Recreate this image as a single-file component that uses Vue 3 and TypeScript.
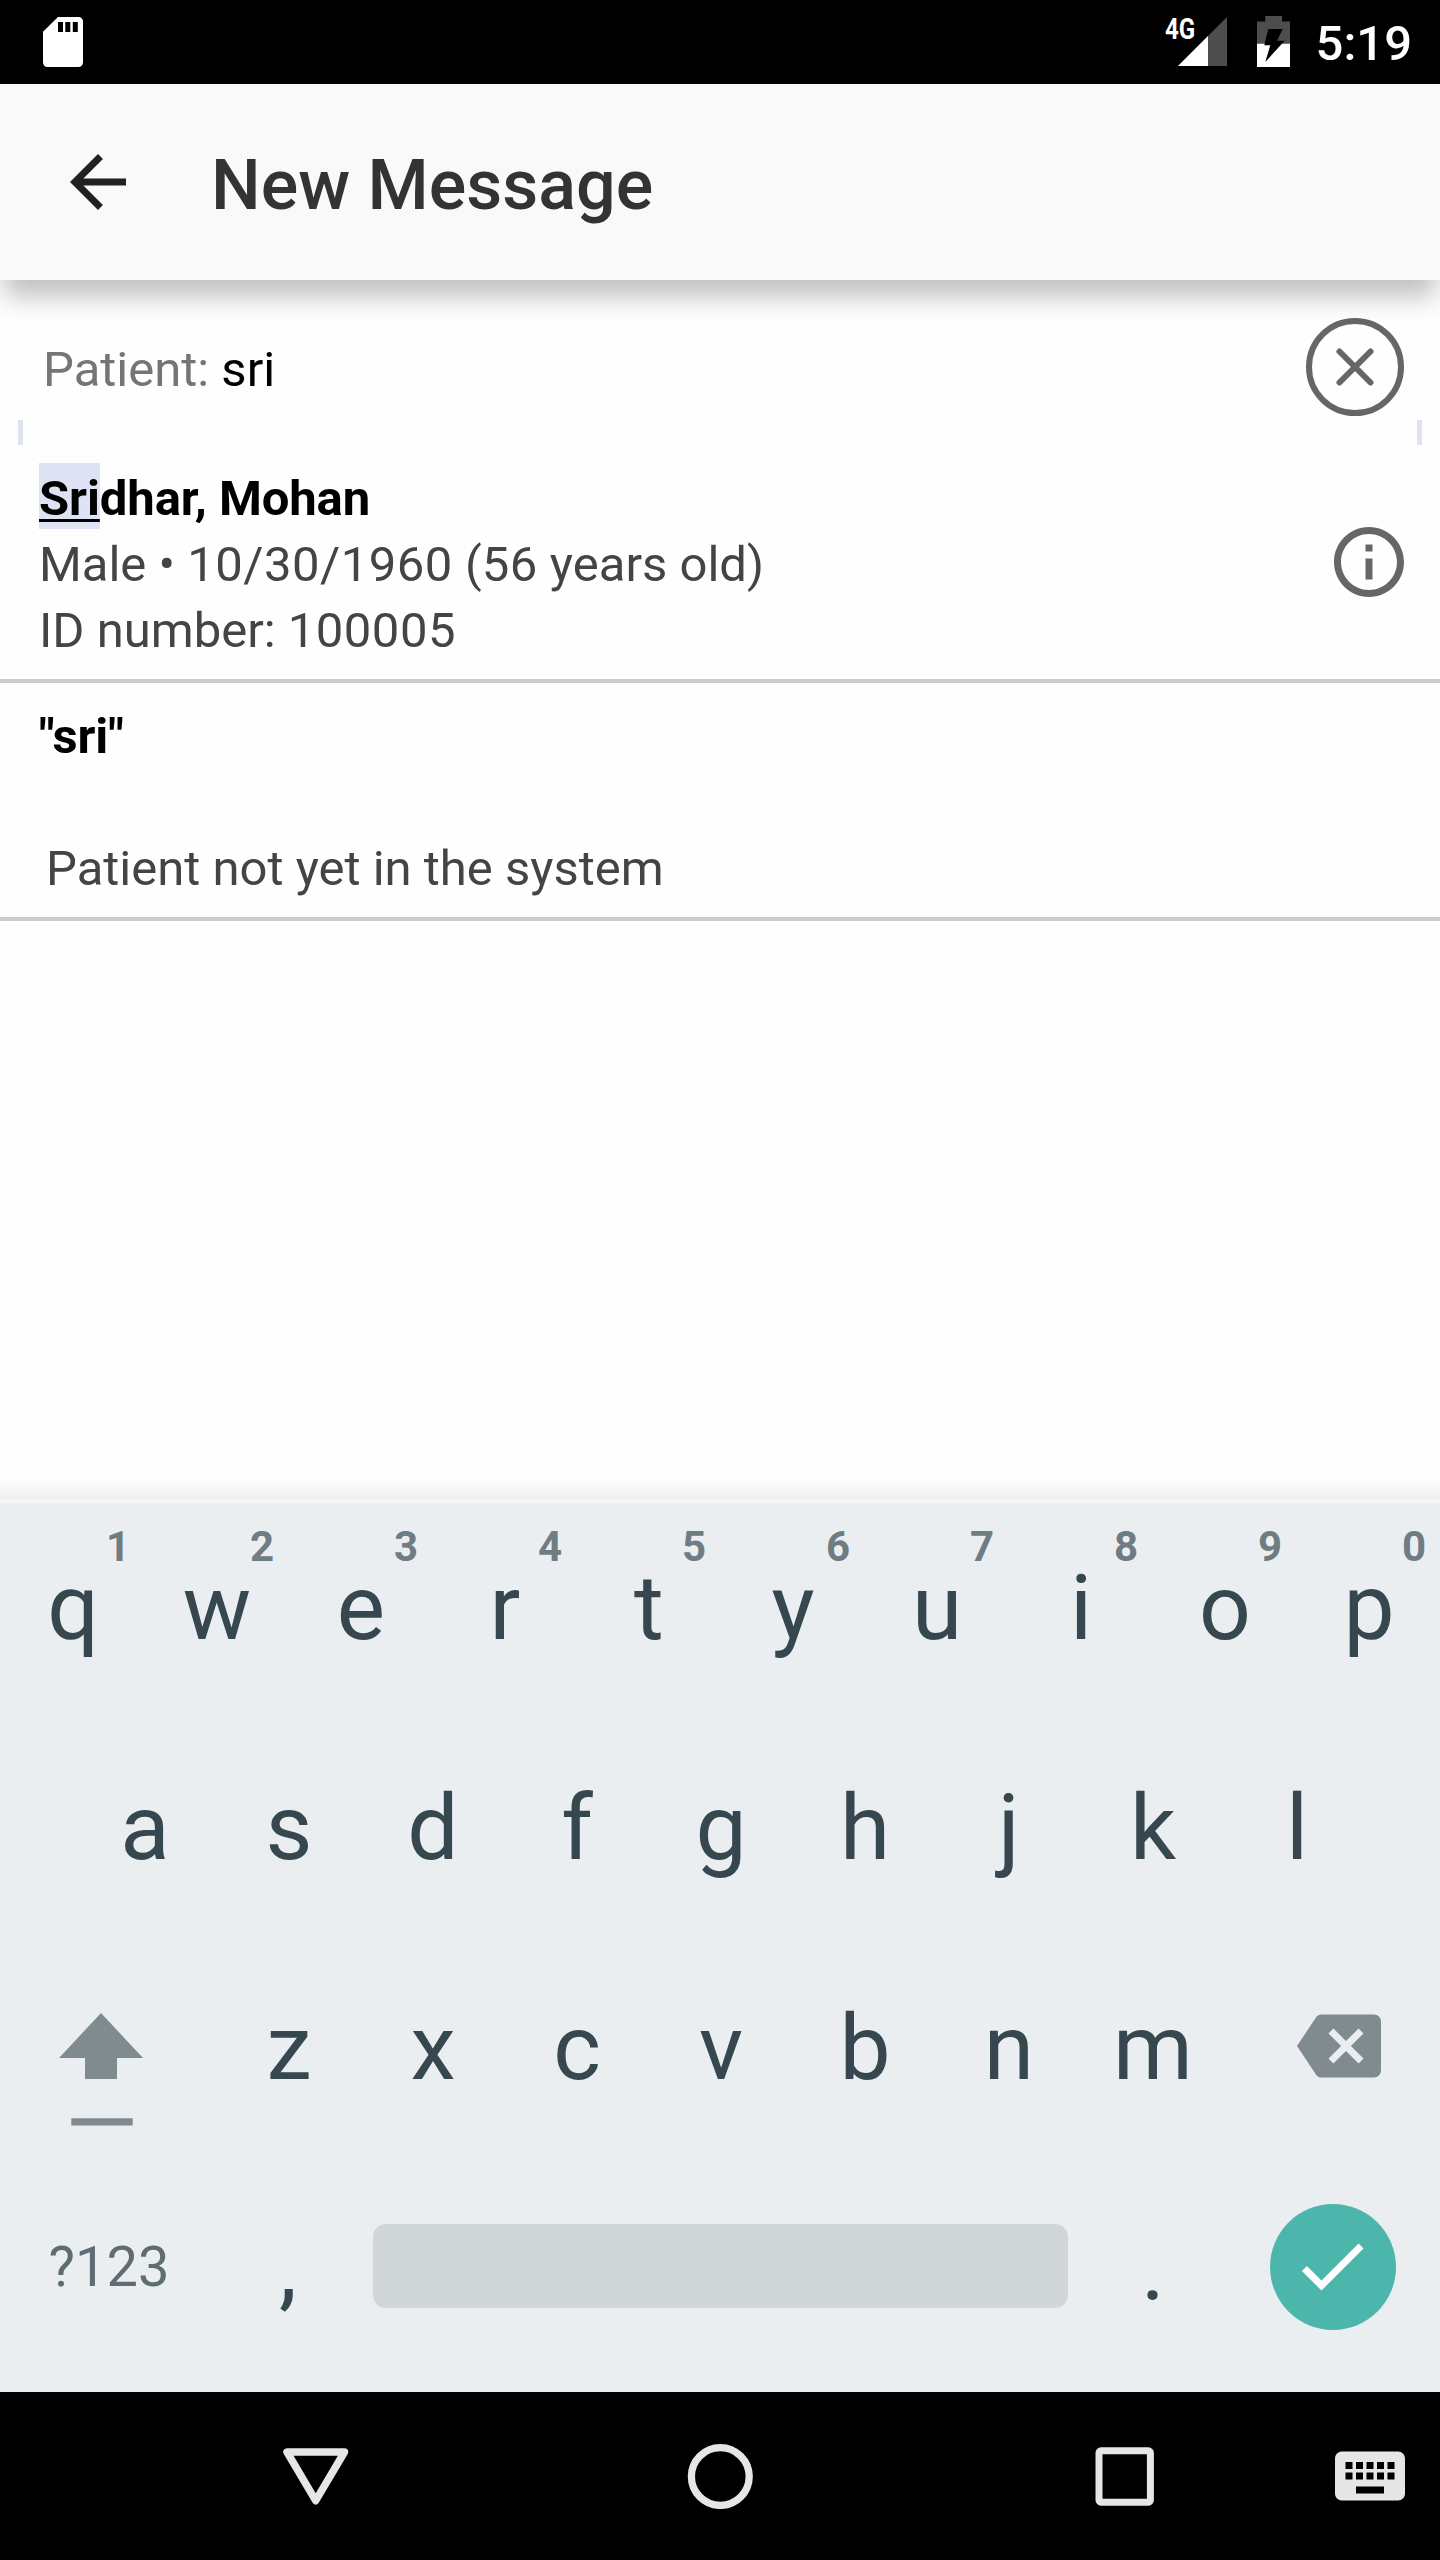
<script setup lang="ts">
interface HintKey {
  label: string
  hint: string
}

const topRow: HintKey[] = 'qwertyuiop'.split('').map((label, i) => ({ label, hint: String((i + 1) % 10) }))
const homeRow: string[] = 'asdfghjkl'.split('')
const bottomRow: string[] = 'zxcvbnm'.split('')
</script>

<template>
  <div class="screen">
    <div class="status">
      <svg class="sd" width="40" height="50" viewBox="0 0 40 50">
        <path d="M15 0H35.5A4.5 4.5 0 0 1 40 4.5V45.500A4.500 4.500 0 0 1 35.500 50H4.500A4.500 4.500 0 0 1 0 45.500V14.800Z" fill="#fff" />
        <path d="M15 5h5v10h-5zM22.300 5h5v10h-5zM29.800 5h5v10h-5z" fill="#000" />
      </svg>
      <div class="status-right">
        <span class="net">4G</span>
        <svg class="signal" width="49" height="49" viewBox="0 0 49 49">
          <path d="M0 49L49 0V49Z" fill="#4d4d4d" />
          <path d="M0 49L30 19V49Z" fill="#fff" />
        </svg>
        <svg class="battery" width="33" height="51" viewBox="0 0 33 51">
          <path d="M8.300 0H25V5.500H33V28H0V5.500H8.300Z" fill="#4d4d4d" />
          <path d="M0 27.700H33V51H0Z" fill="#fff" />
          <path d="M11.300 13H25.700L20 24.700H27.700L8.300 46L13.300 29.300H7.300Z" fill="#000" />
        </svg>
        <span class="clock">5:19</span>
      </div>
    </div>

    <header class="appbar">
      <svg width="84" height="84" viewBox="0 0 24 24" fill="#212121">
        <path d="M20 11H7.830l5.590-5.590L12 4l-8 8 8 8 1.410-1.410L7.830 13H20v-2z" />
      </svg>
      <h1>New Message</h1>
    </header>

    <main class="content">
      <div class="search">
        <div class="field"><span class="field-label">Patient: </span>sri</div>
        <svg width="98" height="98" viewBox="0 0 98 98" fill="none" stroke="#666" stroke-width="6">
          <circle cx="49" cy="49" r="46" />
          <path d="M33.500 33.500L64.500 64.500M64.500 33.500L33.500 64.500" stroke-linecap="round" />
        </svg>
      </div>
      <div class="marks"><i></i><i></i></div>

      <div class="item">
        <div class="lines">
          <div class="name"><mark>Sri</mark>dhar, Mohan</div>
          <div>Male • <span class="num">10/30/1960</span> (<span class="num">56</span> years old)</div>
          <div>ID number: <span class="num">100005</span></div>
        </div>
        <svg class="info" width="84" height="84" viewBox="0 0 24 24" fill="#666">
          <path d="M11 17h2v-6h-2v6zm1-15C6.480 2 2 6.480 2 12s4.480 10 10 10 10-4.480 10-10S17.520 2 12 2zm0 18c-4.410 0-8-3.590-8-8s3.590-8 8-8 8 3.590 8 8-3.590 8-8 8zM11 9h2V7h-2v2z" />
        </svg>
      </div>
      <div class="item">
        <div class="lines spread">
          <div class="name">"sri"</div>
          <div class="note">Patient not yet in the system</div>
        </div>
      </div>
    </main>

    <div class="kb-shadow"></div>
    <section class="keyboard">
      <div class="row">
        <div v-for="k in topRow" :key="k.label" class="key">
          <span class="hint">{{ k.hint }}</span>{{ k.label }}
        </div>
      </div>
      <div class="row">
        <div v-for="k in homeRow" :key="k" class="key">{{ k }}</div>
      </div>
      <div class="row">
        <div class="key wide shift">
          <svg width="84" height="113" viewBox="0 0 84 113" fill="#808b90">
            <path d="M42 0L84 45H58V66H26V45H0Z" />
            <path d="M12.300 105.300H73.700V112.600H12.300Z" />
          </svg>
        </div>
        <div v-for="k in bottomRow" :key="k" class="key">{{ k }}</div>
        <div class="key wide back">
          <svg width="84" height="84" viewBox="0 0 24 24" fill="#808b90">
            <path d="M22 3H7c-.69 0-1.230.35-1.590.88L0 12l5.410 8.110c.36.53.9.89 1.590.89h15c1.100 0 2-.9 2-2V5c0-1.100-.9-2-2-2zm-3 12.590L17.590 17 14 13.410 10.410 17 9 15.590 12.590 12 9 8.410 10.410 7 14 10.590 17.590 7 19 8.410 15.410 12 19 15.590z" />
          </svg>
        </div>
      </div>
      <div class="row">
        <div class="key wide symbols">?123</div>
        <div class="key comma">,</div>
        <div class="key space"><span class="bar"></span></div>
        <div class="key">.</div>
        <div class="key wide enter">
          <span class="disc">
            <svg width="84" height="84" viewBox="0 0 24 24" fill="#fff">
              <path d="M9 16.170L4.830 12l-1.420 1.410L9 19 21 7l-1.410-1.410z" />
            </svg>
          </span>
        </div>
      </div>
    </section>

    <nav class="navbar">
      <svg class="nav-back" width="66" height="58" viewBox="0 0 66 58" fill="none" stroke="#e6e6e6" stroke-width="7.500" stroke-linejoin="round">
        <path d="M4 5H61.500L32.700 53.700Z" />
      </svg>
      <svg class="nav-home" width="66" height="66" viewBox="0 0 66 66" fill="none" stroke="#e6e6e6" stroke-width="7.300">
        <circle cx="33.300" cy="33.500" r="28.900" />
      </svg>
      <svg class="nav-recent" width="60" height="60" viewBox="0 0 60 60" fill="none" stroke="#e6e6e6">
        <rect x="4" y="4.800" width="51.400" height="51.400" rx="2" stroke-width="7" />
      </svg>
      <svg class="nav-ime" width="84" height="84" viewBox="0 0 24 24" fill="#e6e6e6">
        <path d="M20 5H4c-1.100 0-1.990.9-1.990 2L2 17c0 1.100.9 2 2 2h16c1.100 0 2-.9 2-2V7c0-1.100-.9-2-2-2zm-9 3h2v2h-2V8zm0 3h2v2h-2v-2zM8 8h2v2H8V8zm0 3h2v2H8v-2zm-1 2H5v-2h2v2zm0-3H5V8h2v2zm9 7H8v-2h8v2zm0-4h-2v-2h2v2zm0-3h-2V8h2v2zm3 3h-2v-2h2v2zm0-3h-2V8h2v2z" />
      </svg>
    </nav>
  </div>
</template>

<style scoped>
.screen {
  width: 1440px;
  height: 2560px;
  display: flex;
  flex-direction: column;
  overflow: hidden;
  background: #fefefe;
  font-family: Roboto, "Liberation Sans", sans-serif;
}
svg {
  display: block;
  flex: none;
}
.status {
  height: 84px;
  flex: none;
  display: flex;
  justify-content: space-between;
  align-items: center;
  padding: 0 28px 0 43px;
  background: #000;
  color: #fff;
}
.status-right {
  display: flex;
  align-items: flex-start;
  height: 84px;
}
.net {
  width: 13px;
  margin-top: 12px;
  font-size: 29px;
  line-height: 34px;
  font-weight: 700;
  transform: scaleX(0.83);
  transform-origin: 0 0;
}
.signal {
  margin-top: 17px;
}
.battery {
  margin: 16px 0 0 30px;
}
.clock {
  margin: 14px 0 0 26px;
  font-size: 49px;
  line-height: 60px;
  font-weight: 500;
}
.appbar {
  position: relative;
  z-index: 1;
  height: 196px;
  flex: none;
  display: flex;
  align-items: center;
  padding-left: 56px;
  background: #f9f9f9;
  box-shadow: 0 21px 24px -4px rgba(0, 0, 0, 0.24);
}
h1 {
  margin: 6px 0 0 71px;
  font-size: 70px;
  line-height: 84px;
  font-weight: 500;
  color: #333;
}
.content {
  flex: 1;
  font-size: 49px;
  color: #444;
}
.search {
  height: 140px;
  box-sizing: border-box;
  display: flex;
  justify-content: space-between;
  align-items: flex-start;
  padding: 38px 36px 0 43px;
}
.field {
  line-height: 66px;
  margin-top: 19px;
  color: #000;
  white-space: pre;
}
.field-label {
  color: #757575;
}
.marks {
  display: flex;
  justify-content: space-between;
  padding: 0 18px;
}
.marks i {
  width: 5px;
  height: 25px;
  background: #dee3f4;
}
.item {
  display: flex;
  justify-content: space-between;
  padding: 21px 29px 15px 39px;
  border-bottom: 4px solid #ccc;
}
.lines {
  height: 198px;
  line-height: 66px;
  white-space: nowrap;
}
.spread {
  display: flex;
  flex-direction: column;
  justify-content: space-between;
}
.name {
  font-weight: 700;
  letter-spacing: -0.1px;
  color: #000;
}
.num {
  letter-spacing: 0.48px;
}
mark {
  padding: 7px 0 2px;
  background: #dee3f4;
  color: inherit;
  text-decoration: underline;
  text-decoration-thickness: 3px;
  text-underline-offset: 4px;
  text-decoration-skip-ink: none;
}
.note {
  padding-left: 7px;
}
.info {
  margin-top: 54px;
}
.kb-shadow {
  height: 20px;
  flex: none;
  background: linear-gradient(rgba(0, 0, 0, 0), rgba(0, 0, 0, 0.06));
}
.keyboard {
  height: 889px;
  flex: none;
  border-top: 4px solid #f5f6f6;
  background: #ebeef1;
  color: #37474f;
}
.row {
  display: flex;
  justify-content: center;
  height: 220px;
}
.key {
  position: relative;
  width: 144px;
  box-sizing: border-box;
  display: flex;
  align-items: center;
  justify-content: center;
  padding: 0 0 10px 2px;
  font-size: 91px;
  line-height: 110px;
}
.hint {
  position: absolute;
  top: 19px;
  right: 14px;
  font-size: 42px;
  line-height: 50px;
  font-weight: 700;
  color: #6f7c82;
}
.wide {
  width: 216px;
}
.shift {
  padding: 33px 14px 0 0;
}
.back {
  padding: 0 0 14px 14px;
}
.symbols {
  padding: 0 0 12px 2px;
  font-size: 56px;
  color: #5f6d73;
}
.comma {
  padding-left: 0;
}
.space {
  width: 720px;
  padding: 0 0 14px;
}
.bar {
  width: 695px;
  height: 84px;
  border-radius: 13px;
  background: #d1d6d9;
}
.enter {
  padding: 0 0 13px 1px;
}
.disc {
  width: 126px;
  height: 126px;
  box-sizing: border-box;
  padding: 20px 0 0 20px;
  border-radius: 50%;
  background: #4db6ac;
}
.navbar {
  height: 168px;
  flex: none;
  display: flex;
  align-items: center;
  background: #000;
}
.nav-back {
  margin-left: 283px;
}
.nav-home {
  margin-left: 338px;
}
.nav-recent {
  margin-left: 342px;
}
.nav-ime {
  margin-left: 173px;
}
</style>

<style>
body {
  margin: 0;
}
</style>
